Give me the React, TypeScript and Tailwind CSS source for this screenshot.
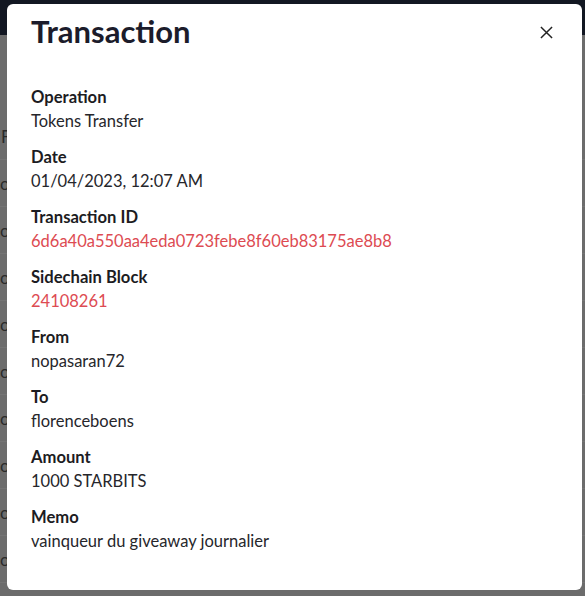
import React from "react";

const rows: { label: string; value: string; red?: boolean }[] = [
  { label: "Operation", value: "Tokens Transfer" },
  { label: "Date", value: "01/04/2023, 12:07 AM" },
  { label: "Transaction ID", value: "6d6a40a550aa4eda0723febe8f60eb83175ae8b8", red: true },
  { label: "Sidechain Block", value: "24108261", red: true },
  { label: "From", value: "nopasaran72" },
  { label: "To", value: "florenceboens" },
  { label: "Amount", value: "1000 STARBITS" },
  { label: "Memo", value: "vainqueur du giveaway journalier" },
];

export default function App() {
  return (
    <div
      className="relative w-[585px] h-[596px] overflow-hidden bg-[#6c6c6c]"
      style={{ fontFamily: "Lato, 'Noto Sans', sans-serif" }}
    >
      <div className="h-[35px] bg-[#121722]" />
      <div className="h-[78px]" />
      <div className="flex flex-col text-[#2a2a2a] text-[17px]">
        <div className="h-[47px] leading-[47px] pl-[1px] border-b border-[#747474]">F</div>
        {[0, 1, 2, 3, 4, 5, 6, 7, 8].map((i) => (
          <div key={i} className="h-[47px] leading-[47px] pl-[0px] border-b border-[#747474]">
            o
          </div>
        ))}
      </div>
      <div className="absolute left-[7px] top-[4px] w-[575px] h-[586px] rounded-[6px] bg-white text-[#212529]">
        <div className="flex items-start justify-between pl-[24px] pr-[29px] pt-[9px]">
          <h1 className="text-[31px] leading-[36px] font-bold text-[#1c1c2b]">Transaction</h1>
          <button className="mt-[13px] text-[#222]" aria-label="Close">
            <svg width="13" height="13" viewBox="0 0 14 14" fill="none" stroke="currentColor" strokeWidth="1.6">
              <path d="M1 1L13 13M13 1L1 13" />
            </svg>
          </button>
        </div>
        <div className="flex flex-col gap-[12px] pl-[24px] pt-[36px]">
          {rows.map((r) => (
            <div key={r.label} className="flex flex-col">
              <div className="text-[16.6px] leading-[24px] font-bold text-[#1c1c22]">{r.label}</div>
              <div className={`text-[16.5px] leading-[24px] ${r.red ? "text-[#dd4b52]" : "text-[#26262b]"}`}>
                {r.value}
              </div>
            </div>
          ))}
        </div>
      </div>
    </div>
  );
}
